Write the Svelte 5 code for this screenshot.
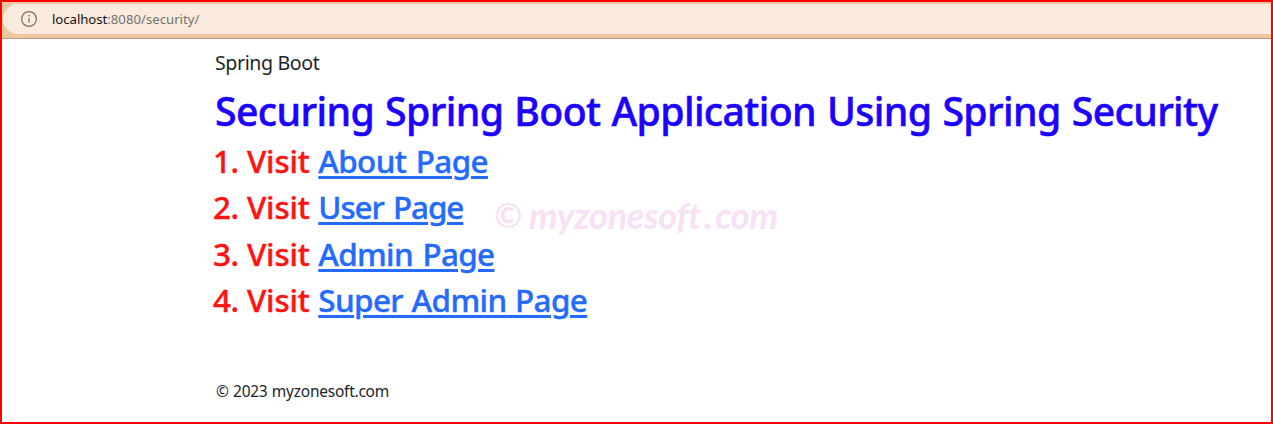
<script>
  const links = ['About Page', 'User Page', 'Admin Page', 'Super Admin Page'];
</script>

<div class="window">
  <header>
    <div class="address">
      <svg width="18" height="18" viewBox="0 0 18 18" fill="none" stroke="#77706a" aria-hidden="true">
        <circle cx="9" cy="9" r="7.4" stroke-width="1.2" />
        <path d="M9 8v4.6" stroke-width="1.3" />
        <circle cx="9" cy="5.7" r=".85" fill="#77706a" stroke="none" />
      </svg>
      <span class="url"><b>localhost</b>:8080/security/</span>
    </div>
  </header>
  <main>
    <p class="brand">Spring Boot</p>
    <h1>Securing Spring Boot Application Using Spring Security</h1>
    <ol>
      {#each links as label, i}
        <li><span class="num">{i + 1}.</span><span class="visit">Visit</span><a href="#top" class="link{i}">{label}</a></li>
      {/each}
    </ol>
    <footer>© 2023 myzonesoft.com</footer>
  </main>
  <div class="watermark"><span class="copy">©</span><span class="site">myzonesoft<i>.</i>com</span></div>
</div>

<style>
  :global(body) { margin: 0; background: #fff; }
  .window {
    box-sizing: border-box;
    position: relative;
    width: 1273px;
    height: 424px;
    border: 2px solid #f00;
    background: #fff;
    overflow: hidden;
    font-family: "Noto Sans", "Open Sans", sans-serif;
    color: #212529;
  }
  header {
    box-sizing: border-box;
    height: 37px;
    padding: 2px 0 4px 1px;
    background: #eec69f;
    border-bottom: 1px solid #b99a80;
  }
  .address {
    height: 30px;
    display: flex;
    align-items: center;
    padding-left: 17px;
    border-radius: 15px 0 0 15px;
    background: #faebde;
  }
  .url { margin-left: 14px; font-size: 13.2px; line-height: 18px; letter-spacing: 0; color: #73706d; white-space: nowrap; }
  .url b { font-weight: 400; color: #111; letter-spacing: -0.05px; }
  main { padding-left: 213px; }
  .brand { margin: 0; padding-top: 9px; font-size: 19.6px; line-height: 30px; letter-spacing: -0.4px; white-space: nowrap; }
  h1 { margin: 9px 0 0; font-size: 39.2px; line-height: 48px; font-weight: 500; color: #1c00ff; letter-spacing: -0.6px; word-spacing: 1.4px; white-space: nowrap; -webkit-text-stroke: 0.5px #1c00ff; }
  ol { list-style: none; margin: 3px 0 0; padding: 0; font-size: 31.4px; font-weight: 500; color: #ff1212; -webkit-text-stroke: 0.4px currentColor; }
  li { height: 46.4px; line-height: 46.4px; display: flex; white-space: nowrap; }
  .num { width: 34px; margin-left: -2px; letter-spacing: -0.4px; }
  .visit { width: 71.3px; letter-spacing: -0.2px; }
  a { color: #246bfd; text-decoration: underline; text-decoration-thickness: 3px; text-underline-offset: 3px; letter-spacing: -0.6px; word-spacing: 2px; }
  .link1 { letter-spacing: -1.05px; }
  .link2 { letter-spacing: -0.65px; }
  .link3 { word-spacing: 1px; }
  footer { margin-top: 55.5px; font-size: 15.5px; line-height: 24px; letter-spacing: -0.25px; word-spacing: 0.6px; padding-left: 1px; white-space: nowrap; }
  .watermark {
    position: absolute;
    left: 492px;
    top: 186px;
    display: flex;
    align-items: center;
    line-height: 54px;
    color: #f8e1f6;
    font-family: Lato, sans-serif;
    font-style: italic;
    font-weight: 700;
    font-size: 36px;
  }
  .copy { width: 35px; font-size: 34px; line-height: 48px; }
  .site { white-space: nowrap; letter-spacing: -0.3px; }
  .site i { margin: 0 3px; }
</style>
